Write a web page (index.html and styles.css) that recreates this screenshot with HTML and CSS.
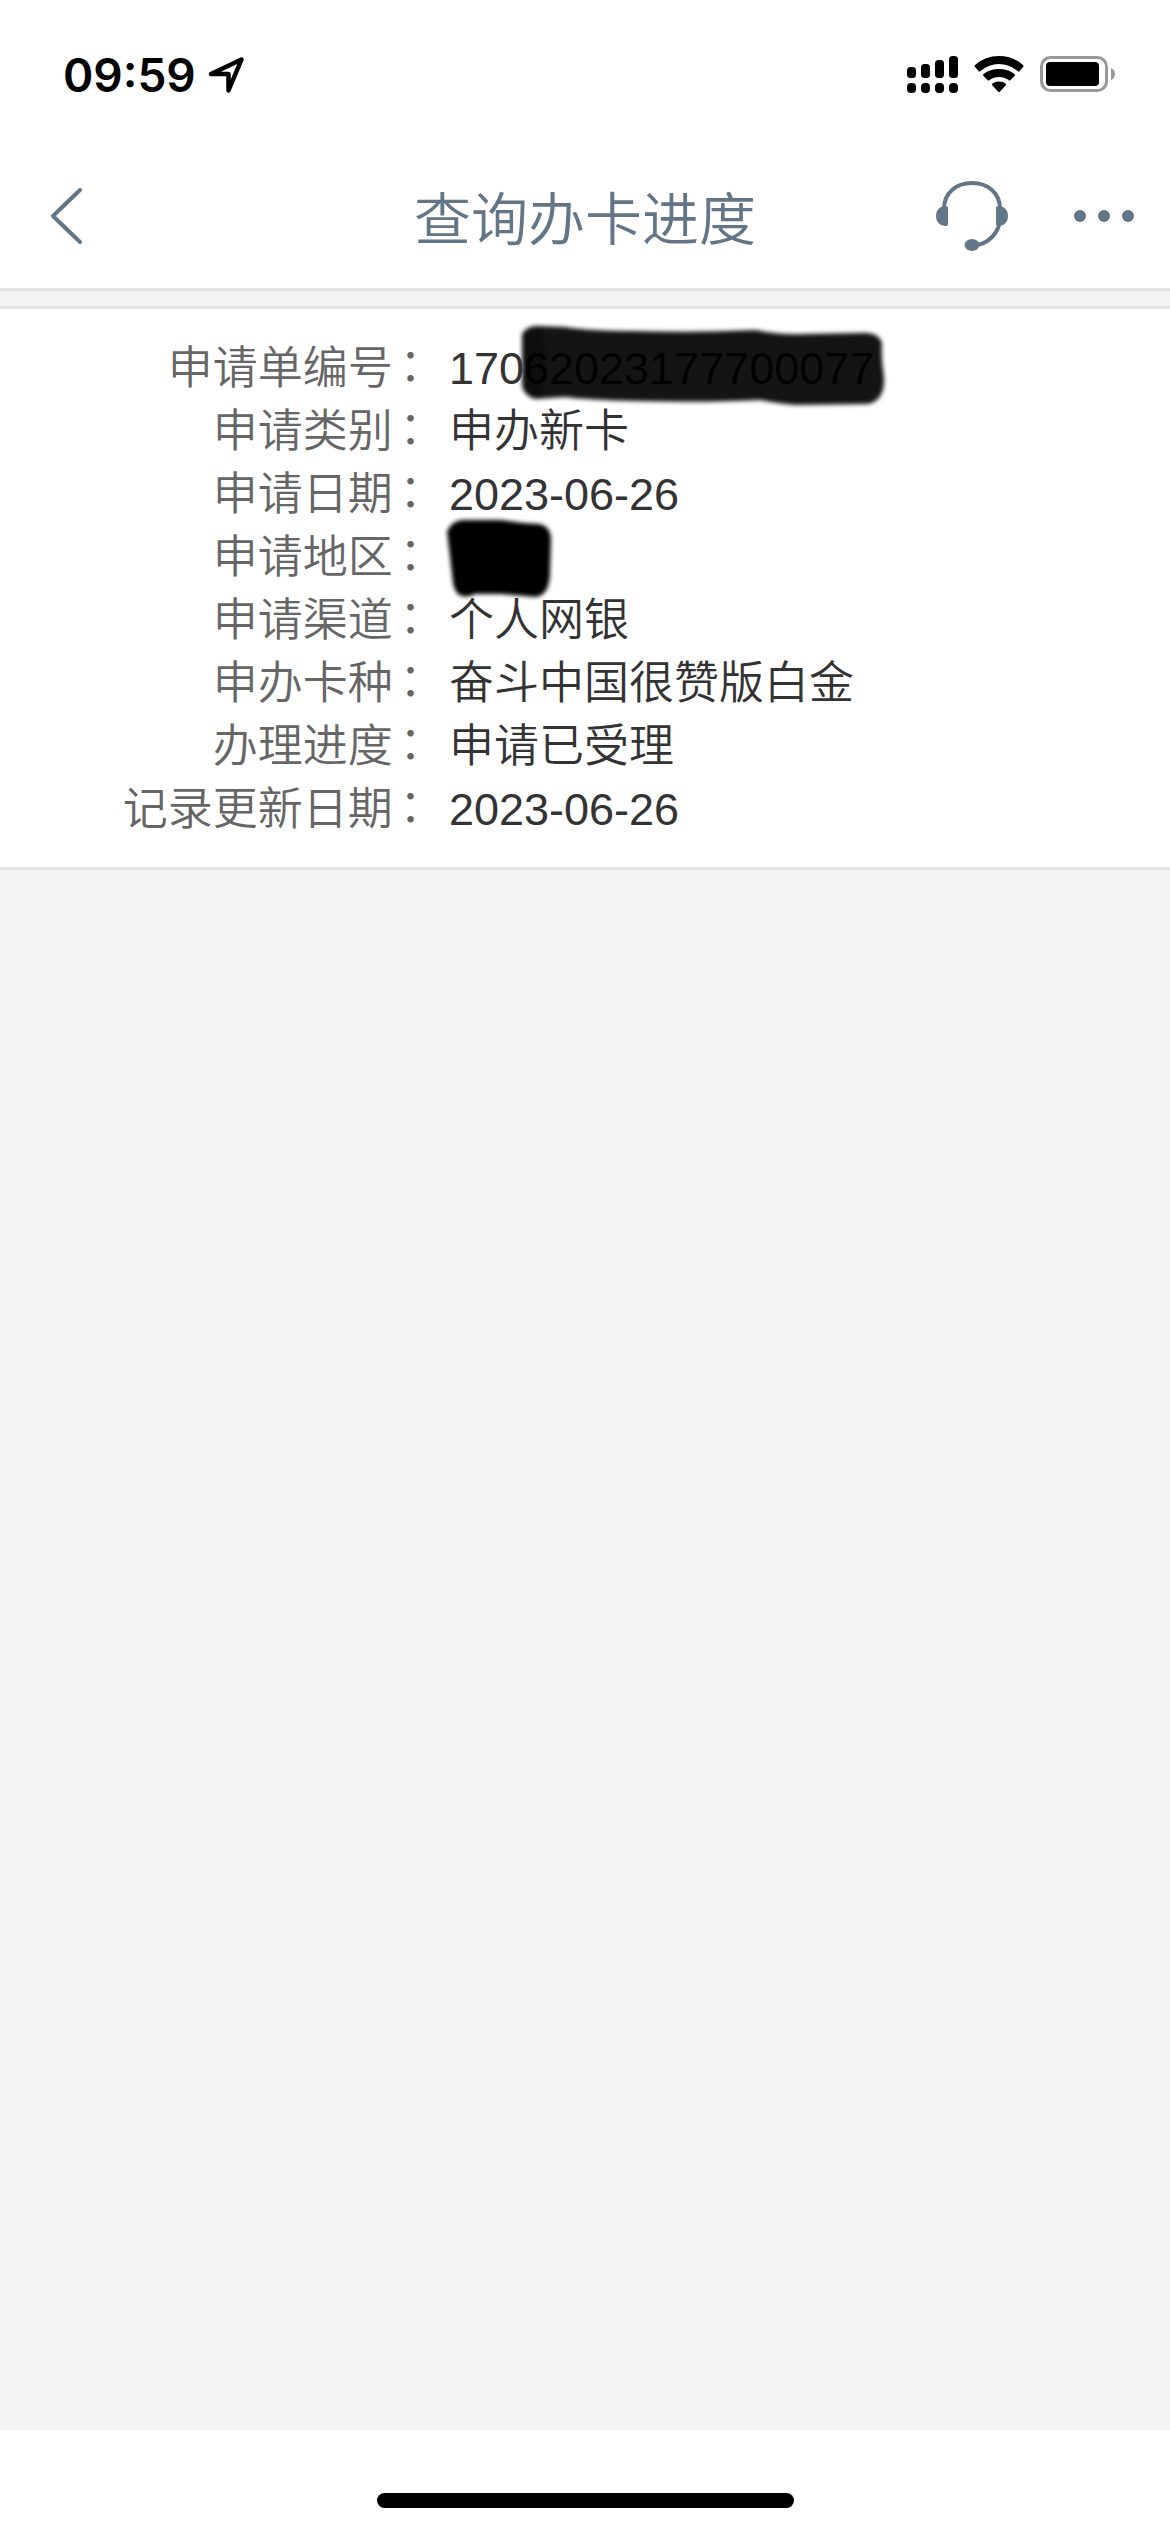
FILE: index.html
```html
<!DOCTYPE html>
<html lang="zh-CN">
<head>
    <meta charset="UTF-8">
    <meta name="viewport" content="width=device-width, initial-scale=1.0">
    <title>查询办卡进度</title>
    <link rel="stylesheet" href="styles.css">
</head>
<body>
    <div class="status-bar">
        <span class="time">09:59</span>
        <svg class="location" width="38" height="38" viewBox="0 0 38 38" fill="none" stroke="#000" stroke-width="4.500" stroke-linejoin="round">
            <path d="M3 18L33.500 3.500L20.500 34.500V18Z"/>
        </svg>
        <div class="status-icons">
            <svg width="52" height="38" viewBox="0 0 52 38">
                <rect x="1" y="11" width="9" height="11" rx="3.500"/>
                <rect x="15" y="8" width="9" height="14" rx="3.500"/>
                <rect x="29" y="4" width="9" height="18" rx="3.500"/>
                <rect x="43" y="0" width="9" height="22" rx="3.500"/>
                <rect x="1" y="27" width="9" height="10" rx="4"/>
                <rect x="15" y="27" width="9" height="10" rx="4"/>
                <rect x="29" y="27" width="9" height="10" rx="4"/>
                <rect x="43" y="27" width="9" height="10" rx="4"/>
            </svg>
            <svg width="50" height="38" viewBox="0 0 50 38">
                <path d="M1 11Q0 10 1 9Q11 0 25 0T49 9Q50 10 49 11L45.500 15Q44.500 16 43.500 15Q35 8 25 8T6.500 15Q5.500 16 4.500 15Z"/>
                <path d="M9.500 20Q8.500 19 9.500 18Q16 13 25 13T40.500 18Q41.500 19 40.500 20L36.500 24Q35.500 25 34.500 24Q30.500 21 25 21T15.500 24Q14.500 25 13.500 24Z"/>
                <path d="M18 29Q17.500 28 18.500 27.500Q21 25.500 25 25.500T31.500 27.500Q32.500 28 32 29L26 35.500Q25 36.500 24 35.500Z"/>
            </svg>
            <svg width="76" height="38" viewBox="0 0 76 38">
                <rect x="1.500" y="1.500" width="65" height="33" rx="9" fill="none" stroke="#999" stroke-width="3"/>
                <rect x="6" y="6" width="53" height="24" rx="4"/>
                <path d="M71 12Q75 14 75 18T71 24Z" fill="#999"/>
            </svg>
        </div>
    </div>

    <header class="nav">
        <button type="button" class="nav-btn back" aria-label="返回">
            <svg width="36" height="60" viewBox="0 0 36 60" fill="none" stroke="#637688" stroke-width="4" stroke-linecap="round" stroke-linejoin="round">
                <path d="M32 4L5 30L32 56"/>
            </svg>
        </button>
        <h1>查询办卡进度</h1>
        <div class="nav-actions">
            <button type="button" class="nav-btn" aria-label="客服">
                <svg width="72" height="70" viewBox="0 0 72 70" fill="#637688">
                    <path d="M8 28C8 12 20 2 36 2S64 12 64 28V37C64 51 52 64 38 64" fill="none" stroke="#637688" stroke-width="4"/>
                    <path d="M12 27V43Q12 45 9 45Q0 44 0 35T9 25Q12 25 12 27Z"/>
                    <path d="M60 27V43Q60 45 63 45Q72 44 72 35T63 25Q60 25 60 27Z"/>
                    <ellipse cx="36" cy="64" rx="7.500" ry="6"/>
                </svg>
            </button>
            <button type="button" class="nav-btn" aria-label="更多">
                <svg width="60" height="12" viewBox="0 0 60 12" fill="#637688">
                    <circle cx="6" cy="6" r="6"/>
                    <circle cx="30" cy="6" r="6"/>
                    <circle cx="54" cy="6" r="6"/>
                </svg>
            </button>
        </div>
    </header>

    <main>
        <dl class="detail">
            <div class="row">
                <dt>申请单编号<span class="colon" lang="zh-TW">：</span></dt>
                <dd>
                    <svg class="mark number-mark" width="376" height="96" viewBox="0 0 376 96">
                        <path d="M7 15Q12 6 24 7L50 8Q75 12 120 12Q180 14 240 11Q265 16 290 15L345 14Q363 12 367 24Q366 40 369 58Q370 82 353 85L280 86Q260 84 245 81Q190 84 120 82Q75 81 50 78L20 80Q8 76 7 66Z" fill="#141414"/>
                        <path d="M9 17Q13 9 26 9Q33 44 27 77Q12 80 9 66Z" fill="#0e0e0e"/>
                    </svg>
                    <span class="number">170<span class="covered">62023177700077</span></span>
                </dd>
            </div>
            <div class="row">
                <dt>申请类别<span class="colon" lang="zh-TW">：</span></dt>
                <dd>申办新卡</dd>
            </div>
            <div class="row">
                <dt>申请日期<span class="colon" lang="zh-TW">：</span></dt>
                <dd>2023-06-26</dd>
            </div>
            <div class="row">
                <dt>申请地区<span class="colon" lang="zh-TW">：</span></dt>
                <dd>
                    <svg class="mark area-mark" width="116" height="90" viewBox="0 0 116 90">
                        <path d="M6 17Q12 6 22 6L60 6Q80 9 98 10Q110 12 110 26L109 60Q108 82 94 83L60 80L34 80Q24 85 17 80Q12 76 11 60Z"/>
                    </svg>
                </dd>
            </div>
            <div class="row">
                <dt>申请渠道<span class="colon" lang="zh-TW">：</span></dt>
                <dd>个人网银</dd>
            </div>
            <div class="row">
                <dt>申办卡种<span class="colon" lang="zh-TW">：</span></dt>
                <dd>奋斗中国很赞版白金</dd>
            </div>
            <div class="row">
                <dt>办理进度<span class="colon" lang="zh-TW">：</span></dt>
                <dd>申请已受理</dd>
            </div>
            <div class="row">
                <dt>记录更新日期<span class="colon" lang="zh-TW">：</span></dt>
                <dd>2023-06-26</dd>
            </div>
        </dl>
    </main>

    <footer class="home-bar">
        <div class="home-indicator"></div>
    </footer>
</body>
</html>
```
FILE: styles.css
```css
* {
    box-sizing: border-box;
}
body {
    display: flex;
    flex-direction: column;
    min-height: 100vh;
    margin: 0;
    background-color: #f3f3f3;
    font-family: "Liberation Sans", "Noto Sans CJK SC", sans-serif;
}
svg {
    display: block;
}
.status-bar {
    display: flex;
    align-items: center;
    height: 141px;
    padding: 9px 54px 0 63px;
    background: white;
}
.time {
    font-family: Inter, sans-serif;
    font-size: 46px;
    font-weight: 600;
    line-height: 60px;
}
.location {
    margin-left: 12px;
}
.status-icons {
    display: flex;
    gap: 16px;
    margin-left: auto;
}
.nav {
    display: grid;
    grid-template-columns: 1fr auto 1fr;
    align-items: center;
    height: 150px;
    padding: 3px 36px 0;
    background: white;
    border-bottom: 3px solid #e2e2e2;
}
.nav h1 {
    margin: 0;
    padding-top: 8px;
    color: #637688;
    font-size: 57px;
    font-weight: 350;
    line-height: 84px;
}
.nav-btn {
    padding: 0;
    border: none;
    background: none;
    cursor: pointer;
}
.back {
    justify-self: start;
    padding-left: 12px;
}
.nav-actions {
    display: flex;
    align-items: center;
    justify-content: flex-end;
    gap: 66px;
}
main {
    flex: 1;
    padding-top: 15px;
}
.detail {
    margin: 0;
    padding: 28px 0 26px;
    background: white;
    border-top: 3px solid #e2e2e2;
    border-bottom: 3px solid #e2e2e2;
    font-size: 45px;
    font-weight: 350;
    line-height: 63px;
}
.row {
    display: flex;
    height: 63px;
}
dt {
    width: 37%;
    color: #666;
    text-align: right;
}
/* full-width colon centred in its cell */
.colon {
    margin-left: -5px;
    font-family: "Liberation Sans", "Noto Sans CJK TC", sans-serif;
}
dd {
    position: relative;
    flex: 1;
    margin: 0 0 0 16px;
    color: #333;
}
.number {
    position: relative;
}
.covered {
    color: #020202;
}
.mark {
    position: absolute;
    filter: blur(2px);
}
.number-mark {
    top: -18px;
    left: 66px;
}
.area-mark {
    top: -12px;
    left: -8px;
}
.home-bar {
    display: flex;
    justify-content: center;
    align-items: flex-end;
    height: 102px;
    padding-bottom: 24px;
    background: white;
}
.home-indicator {
    width: 417px;
    height: 15px;
    border-radius: 8px;
    background: black;
}
```
